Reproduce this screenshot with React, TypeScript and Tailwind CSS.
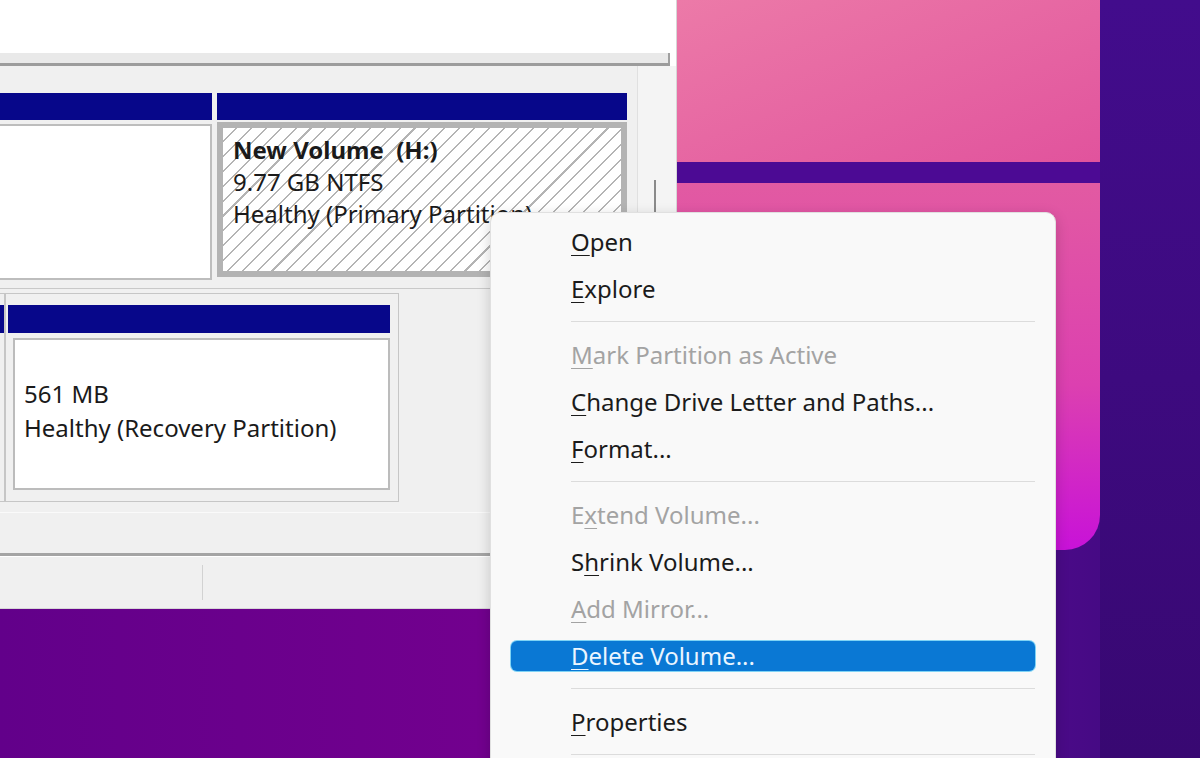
function Wallpaper() {
  return (
    <svg className="absolute inset-0" width="1200" height="758" viewBox="0 0 1200 758">
      <defs>
        <linearGradient id="wpBase" x1="0" y1="0" x2="1" y2="0">
          <stop offset="0" stopColor="#62008a" />
          <stop offset="0.4" stopColor="#72008e" />
          <stop offset="0.85" stopColor="#4e0a8a" />
          <stop offset="1" stopColor="#3c0a7e" />
        </linearGradient>
        <linearGradient id="wpRight" x1="0" y1="0" x2="0" y2="1">
          <stop offset="0" stopColor="#420c8c" />
          <stop offset="1" stopColor="#380872" />
        </linearGradient>
        <linearGradient id="wpPaneTop" x1="0" y1="0" x2="1" y2="1">
          <stop offset="0" stopColor="#ec7aa8" />
          <stop offset="1" stopColor="#e1539d" />
        </linearGradient>
        <linearGradient id="wpPaneBottom" x1="0" y1="0" x2="0" y2="1">
          <stop offset="0" stopColor="#e25aa2" />
          <stop offset="0.55" stopColor="#dc40b0" />
          <stop offset="1" stopColor="#c812d8" />
        </linearGradient>
      </defs>
      <rect width="1200" height="758" fill="url(#wpBase)" />
      <rect x="1100" y="0" width="100" height="758" fill="url(#wpRight)" />
      <rect x="677" y="0" width="423" height="162" fill="url(#wpPaneTop)" />
      <rect x="677" y="162" width="423" height="21" fill="#4c0a94" />
      <path d="M677 183 H1100 V515 A35 35 0 0 1 1065 550 H677 Z" fill="url(#wpPaneBottom)" />
    </svg>
  );
}

function DiskWindow() {
  return (
    <div className="absolute left-0 top-0 flex h-[609px] w-[677px] flex-col border-r border-b border-[#d6d6d6] bg-[#f0f0f0] text-[24px] text-[#1a1a1a]">
      {/* volume list */}
      <div className="h-[66px] bg-white">
        <div className="h-[53px]" />
        <div className="mr-[6px] h-[10px] border-r-2 border-[#a0a0a0] bg-[#e9e9e9]" />
        <div className="mr-[6px] h-[3px] bg-[#9c9c9c]" />
      </div>

      {/* graphical view */}
      <div className="flex h-[487px]">
        <div className="w-[637px] pt-[27px]">
          <div className="flex h-[189px] gap-[5px]">
            <div className="w-[212px]">
              <div className="h-[27px] bg-[#07078a]" />
              <div className="mt-[4px] h-[156px] border-2 border-l-0 border-[#bdbdbd] bg-white" />
            </div>
            <div className="w-[410px]">
              <div className="h-[27px] bg-[#07078a]" />
              <div className="mt-[2px] h-[155px] overflow-hidden border-[6px] border-[#b3b3b3] bg-[image:repeating-linear-gradient(135deg,#ffffff_0px,#ffffff_9px,#b4b4b4_9px,#b4b4b4_10.5px)] pl-[10px] pt-[6px] leading-[32px]">
                <div className="whitespace-pre font-bold">New Volume  (H:)</div>
                <div>9.77 GB NTFS</div>
                <div className="whitespace-nowrap">Healthy (Primary Partition)</div>
              </div>
            </div>
          </div>

          <div className="mt-[6px] h-px bg-[#c9c9c9]" />

          <div className="mt-[4px] flex h-[209px] w-[399px] border-y border-r border-[#c6c6c6]">
            <div className="w-[4px] pt-[11px]">
              <div className="h-[28px] bg-[#07078a]" />
            </div>
            <div className="w-[2px] bg-[#c6c6c6]" />
            <div className="flex-1 pl-[2px] pr-[8px] pt-[11px]">
              <div className="h-[28px] bg-[#07078a]" />
              <div className="ml-[5px] mt-[5px] h-[152px] border-2 border-[#bcbcbc] bg-white pl-[9px] pt-[37px] leading-[34px]">
                <div>561 MB</div>
                <div className="whitespace-nowrap">Healthy (Recovery Partition)</div>
              </div>
            </div>
          </div>
          <div className="mt-[10px] h-px bg-[#fafafa]" />
        </div>

        <div className="flex-1 border-l border-[#e0e0e0] bg-[#f4f4f4]">
          <div className="ml-[16px] mt-[114px] h-[34px] w-[2px] bg-[#8a8a8a]" />
        </div>
      </div>

      {/* status bar */}
      <div className="h-[3px] bg-[#a4a4a4]" />
      <div className="h-px bg-white" />
      <div className="flex h-[51px]">
        <div className="my-[8px] w-[203px] border-r border-[#d2d2d2]" />
      </div>
    </div>
  );
}

type Item = { label: string; key: number; disabled?: boolean; active?: boolean } | "sep";

const items: Item[] = [
  { label: "Open", key: 0 },
  { label: "Explore", key: 0 },
  "sep",
  { label: "Mark Partition as Active", key: 0, disabled: true },
  { label: "Change Drive Letter and Paths...", key: 0 },
  { label: "Format...", key: 0 },
  "sep",
  { label: "Extend Volume...", key: 1, disabled: true },
  { label: "Shrink Volume...", key: 1 },
  { label: "Add Mirror...", key: 0, disabled: true },
  { label: "Delete Volume...", key: 0, active: true },
  "sep",
  { label: "Properties", key: 0 },
  "sep",
];

function ContextMenu() {
  return (
    <div className="absolute left-[490px] top-[212px] w-[566px] rounded-[10px] border border-[#e0e0e0] bg-[#f9f9f9] pb-[20px] pt-[5px] text-[24px] shadow-[0_4px_14px_rgba(0,0,0,0.18)]">
      {items.map((it, i) =>
        it === "sep" ? (
          <div key={i} className="flex h-[19px] items-center pl-[80px] pr-[20px]">
            <div className="h-px w-full bg-[#dcdcdc]" />
          </div>
        ) : (
          <div key={i} className="flex h-[47px] items-center px-[20px]">
            <div
              className={
                it.active
                  ? "flex h-[30px] w-full items-center rounded-[6px] bg-[#0a78d4] pl-[60px] text-[#eaf5ff] shadow-[0_0_0_1px_#7fd3f5]"
                  : it.disabled
                    ? "flex h-[30px] w-full items-center pl-[60px] text-[#a3a3a3]"
                    : "flex h-[30px] w-full items-center pl-[60px] text-[#1b1b1b]"
              }
            >
              <span className="whitespace-nowrap">
                {it.label.slice(0, it.key)}
                <span className="underline decoration-1 underline-offset-[4px]">{it.label[it.key]}</span>
                {it.label.slice(it.key + 1)}
              </span>
            </div>
          </div>
        ),
      )}
    </div>
  );
}

export default function App() {
  return (
    <div className="relative h-[758px] w-[1200px] overflow-hidden font-['Noto_Sans',sans-serif]">
      <Wallpaper />
      <DiskWindow />
      <ContextMenu />
    </div>
  );
}
